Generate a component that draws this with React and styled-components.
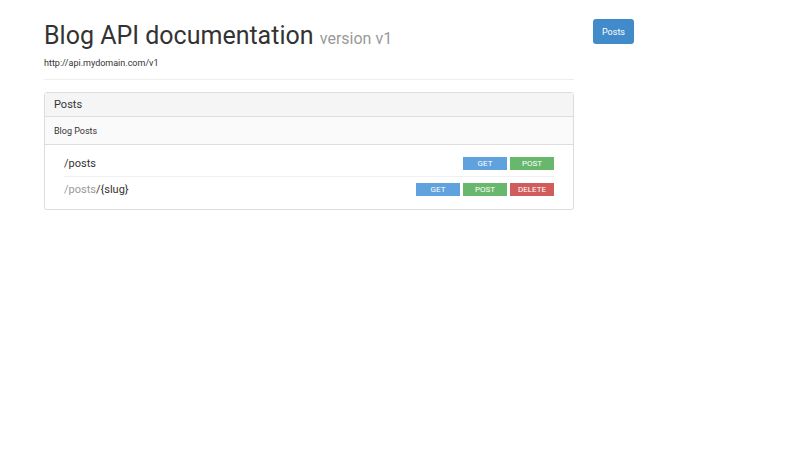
import React from "react";
import styled, { createGlobalStyle } from "styled-components";

const Global = createGlobalStyle`
  body { margin: 0; background: #fff; font-family: Roboto, "Liberation Sans", Arial, sans-serif; color: #333; }
`;
const Page = styled.div`display: flex; gap: 19px; padding: 0 0 0 44px;`;
const Main = styled.div`width: 530px;`;
const Side = styled.div`padding-top: 19px;`;
const Title = styled.h1`
  margin: 20px 0 0; font-size: 25px; font-weight: 400; line-height: 32px; color: #333;
  small { font-size: 16px; color: #999; }
`;
const Url = styled.div`font-size: 9px; margin-top: 2px; line-height: 12px;`;
const Rule = styled.hr`border: 0; border-top: 1px solid #eee; margin: 10px 0 12px;`;
const Panel = styled.div`border: 1px solid #ddd; border-radius: 3px; box-shadow: 0 1px 1px rgba(0,0,0,.05);`;
const PanelHead = styled.div`background: #f5f5f5; border-bottom: 1px solid #ddd; height: 23px; padding: 0 9px; display: flex; align-items: center; font-size: 11px;`;
const PanelSub = styled.div`background: #fafafa; border-bottom: 1px solid #ddd; height: 27px; padding: 0 9px; display: flex; align-items: center; font-size: 9px;`;
const List = styled.div`padding: 6px 19px 7px 19px;`;
const Row = styled.div`
  display: flex; align-items: center; justify-content: space-between; height: 25px;
  font-size: 11px;
  & + & { border-top: 1px solid #f0f0f0; }
`;
const Faint = styled.span`color: #999;`;
const Btns = styled.div`display: flex; gap: 3px;`;
const M = styled.span`
  width: 44px; height: 13px; display: flex; align-items: center; justify-content: center;
  font-size: 8px; color: #fff; background: ${p => p.$c};
`;
const SideBtn = styled.div`
  width: 41px; height: 25px; border-radius: 3px; background: #428bca; color: #fff;
  font-size: 9px; display: flex; align-items: center; justify-content: center;
`;
const C = { GET: "#5fa2dd", POST: "#67b76d", DELETE: "#d05d5b" };
const Methods = ({ list }) => <Btns>{list.map(m => <M key={m} $c={C[m]}>{m}</M>)}</Btns>;

export default function App() {
  return (
    <Page>
      <Global />
      <Main>
        <Title>Blog API documentation <small>version v1</small></Title>
        <Url>http://api.mydomain.com/v1</Url>
        <Rule />
        <Panel>
          <PanelHead>Posts</PanelHead>
          <PanelSub>Blog Posts</PanelSub>
          <List>
            <Row><span>/posts</span><Methods list={["GET", "POST"]} /></Row>
            <Row><span><Faint>/posts</Faint>/{"{slug}"}</span><Methods list={["GET", "POST", "DELETE"]} /></Row>
          </List>
        </Panel>
      </Main>
      <Side><SideBtn>Posts</SideBtn></Side>
    </Page>
  );
}
